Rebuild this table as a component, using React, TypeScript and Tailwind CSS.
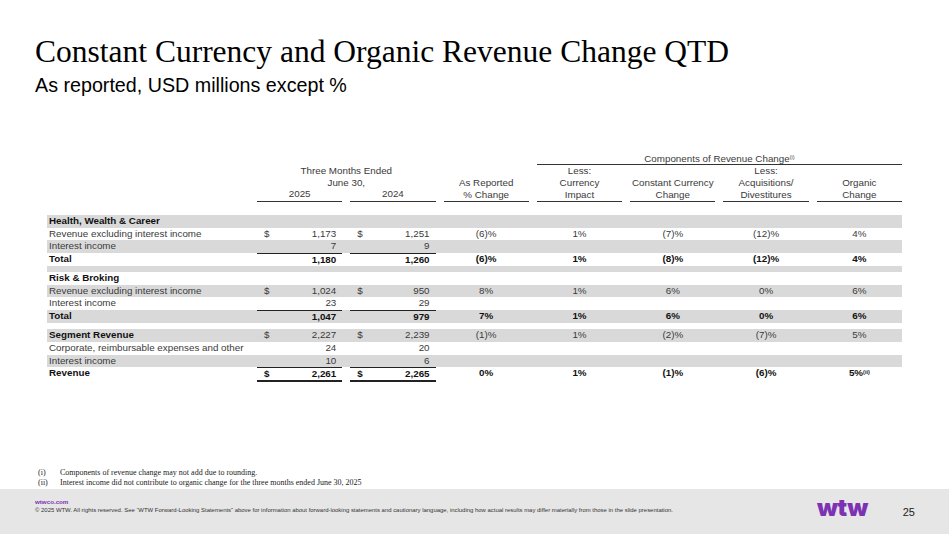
import React from 'react';
import clsx from 'clsx';

type Row = {
  label?: string;
  gray: boolean;
  kind: 'section' | 'data' | 'spacer';
  boldLabel?: boolean;
  boldValues?: boolean;
  money?: [string, string];
  dollar?: boolean;
  pcts?: string[];
  lineTop?: boolean;
  spacerH?: 'a' | 'b';
};

// Datos de la tabla, en el orden del reporte
const rows: Row[] = [
  { kind: 'section', label: 'Health, Wealth & Career', gray: true },
  {
    kind: 'data',
    label: 'Revenue excluding interest income',
    gray: false,
    money: ['1,173', '1,251'],
    dollar: true,
    pcts: ['(6)%', '1%', '(7)%', '(12)%', '4%'],
  },
  { kind: 'data', label: 'Interest income', gray: true, money: ['7', '9'] },
  {
    kind: 'data',
    label: 'Total',
    gray: false,
    boldLabel: true,
    boldValues: true,
    money: ['1,180', '1,260'],
    pcts: ['(6)%', '1%', '(8)%', '(12)%', '4%'],
    lineTop: true,
  },
  { kind: 'spacer', gray: true, spacerH: 'a' },
  { kind: 'section', label: 'Risk & Broking', gray: false },
  {
    kind: 'data',
    label: 'Revenue excluding interest income',
    gray: true,
    money: ['1,024', '950'],
    dollar: true,
    pcts: ['8%', '1%', '6%', '0%', '6%'],
  },
  { kind: 'data', label: 'Interest income', gray: false, money: ['23', '29'] },
  {
    kind: 'data',
    label: 'Total',
    gray: true,
    boldLabel: true,
    boldValues: true,
    money: ['1,047', '979'],
    pcts: ['7%', '1%', '6%', '0%', '6%'],
    lineTop: true,
  },
  { kind: 'spacer', gray: false, spacerH: 'b' },
  {
    kind: 'data',
    label: 'Segment Revenue',
    gray: true,
    boldLabel: true,
    money: ['2,227', '2,239'],
    dollar: true,
    pcts: ['(1)%', '1%', '(2)%', '(7)%', '5%'],
  },
  { kind: 'data', label: 'Corporate, reimbursable expenses and other', gray: false, money: ['24', '20'] },
  { kind: 'data', label: 'Interest income', gray: true, money: ['10', '6'] },
  {
    kind: 'data',
    label: 'Revenue',
    gray: false,
    boldLabel: true,
    boldValues: true,
    money: ['2,261', '2,265'],
    dollar: true,
    pcts: ['0%', '1%', '(1)%', '(6)%', '5%'],
    lineTop: true,
  },
];

const GRID = 'grid grid-cols-[202px_repeat(7,minmax(0,1fr))]';

const MoneyCell: React.FC<{ v: string; dollar?: boolean; top?: boolean }> = ({ v, dollar, top }) => (
  <div className="pl-2">
    <div className={clsx('flex justify-between pl-[7px] pr-[6px] h-full', top && 'border-t-[1.5px] border-[#222]')}>
      <span>{dollar ? '$' : ''}</span>
      <span>{v}</span>
    </div>
  </div>
);

const HeadCell: React.FC<{ lines: string[] }> = ({ lines }) => (
  <div className="pl-2 flex flex-col justify-end">
    <div className="border-b-[1.5px] border-[#333] text-center">
      {lines.map((l, i) => (
        <div key={i} className="h-[11.8px]">{l}</div>
      ))}
    </div>
  </div>
);

const TableRow: React.FC<{ row: Row }> = ({ row }) => {
  if (row.kind === 'spacer') {
    return (
      <div
        className={clsx(
          row.spacerH === 'a' ? 'h-[6px]' : 'h-[6.7px]',
          row.gray ? 'bg-[#d9d9d9]' : 'bg-white'
        )}
      />
    );
  }

  return (
    <div
      className={clsx(
        GRID,
        'h-[12.7px] leading-[12.7px]',
        row.gray ? 'bg-[#d9d9d9]' : 'bg-white'
      )}
    >
      <div
        className={clsx(
          'pl-[2px] whitespace-nowrap',
          (row.kind === 'section' || row.boldLabel) && 'font-bold text-[#111]'
        )}
      >
        {row.label}
      </div>
      {row.money && (
        <>
          <div className={clsx('contents', row.boldValues && 'font-bold text-[#111]')}>
            <MoneyCell v={row.money[0]} dollar={row.dollar} top={row.lineTop} />
            <MoneyCell v={row.money[1]} dollar={row.dollar} top={row.lineTop} />
          </div>
          {row.pcts &&
            row.pcts.map((p, i) => (
              <div
                key={i}
                className={clsx('pl-2 text-center', row.boldValues && 'font-bold text-[#111]')}
              >
                {row.label === 'Revenue' && i === 4 ? (
                  <span>
                    5%<sup className="text-[5.5px]">(ii)</sup>
                  </span>
                ) : (
                  p
                )}
              </div>
            ))}
        </>
      )}
    </div>
  );
};

const App: React.FC = () => {
  return (
    <div className="w-[949px] h-[534px] bg-white flex flex-col overflow-hidden">
      {/* Encabezado */}
      <div className="pl-[35px] pt-[36px]">
        <h1 className="text-[31.5px] leading-none text-black font-['Liberation_Serif','Times_New_Roman',serif]">
          Constant Currency and Organic Revenue Change QTD
        </h1>
        <p className="mt-[8px] text-[19.7px] leading-none text-black font-['Liberation_Sans',Arial,sans-serif]">
          As reported, USD millions except %
        </p>
      </div>

      {/* Tabla */}
      <div className="ml-[47px] mt-[57.5px] w-[855px] text-[9.8px] text-[#3a3a3a] font-['Liberation_Sans',Arial,sans-serif]">
        <div className={GRID}>
          <div className="col-start-5 col-span-4 pl-2">
            <div className="h-[12px] leading-[12px] text-center border-b-[1.5px] border-[#333]">
              Components of Revenue Change<sup className="text-[5.5px]">(i)</sup>
            </div>
          </div>
        </div>
        <div className={clsx(GRID, 'leading-[11.8px]')}>
          <div />
          <div className="col-span-2 flex flex-col text-center">
            <div className="pl-2 h-[11.8px]">Three Months Ended</div>
            <div className="pl-2 h-[11.8px]">June 30,</div>
            <div className="grid grid-cols-2">
              <div className="pl-2">
                <div className="border-b-[1.5px] border-[#333] h-[13.3px]">2025</div>
              </div>
              <div className="pl-2">
                <div className="border-b-[1.5px] border-[#333] h-[13.3px]">2024</div>
              </div>
            </div>
          </div>
          <HeadCell lines={['', 'As Reported', '% Change']} />
          <HeadCell lines={['Less:', 'Currency', 'Impact']} />
          <HeadCell lines={['', 'Constant Currency', 'Change']} />
          <HeadCell lines={['Less:', 'Acquisitions/', 'Divestitures']} />
          <HeadCell lines={['', 'Organic', 'Change']} />
        </div>

        <div className="mt-[13.5px]">
          {rows.map((r, i) => (
            <TableRow key={i} row={r} />
          ))}
          {/* Doble subrayado del total */}
          <div className={clsx(GRID, 'h-[2px]')}>
            <div />
            <div className="pl-2">
              <div className="h-[2px] bg-[#222]" />
            </div>
            <div className="pl-2">
              <div className="h-[2px] bg-[#222]" />
            </div>
          </div>
        </div>
      </div>

      {/* Notas */}
      <div className="mt-[86px] pl-[38px] text-[8px] leading-[10px] text-[#222] font-['Liberation_Serif','Times_New_Roman',serif]">
        <div className="grid grid-cols-[22px_1fr]">
          <span>(i)</span>
          <span>Components of revenue change may not add due to rounding.</span>
          <span>(ii)</span>
          <span>Interest income did not contribute to organic change for the three months ended June 30, 2025</span>
        </div>
      </div>

      {/* Pie de página */}
      <div className="mt-auto h-[45px] shrink-0 bg-[#e6e6e6] flex justify-between font-['Liberation_Sans',Arial,sans-serif]">
        <div className="pl-[35px] pt-[9px]">
          <div className="text-[6.2px] leading-[8px] font-bold text-[#7d32b3]">wtwco.com</div>
          <div className="text-[5.95px] leading-[8px] text-[#333] whitespace-nowrap">
            © 2025 WTW. All rights reserved. See “WTW Forward-Looking Statements” above for information about forward-looking statements and cautionary language, including how actual results may differ materially from those in the slide presentation.
          </div>
        </div>
        <div className="flex items-start gap-[35px] pr-[34px]">
          <span className="mt-[7px] text-[24px] leading-none font-black tracking-[-0.02em] text-[#7d32b3] font-['Inter','Roboto',sans-serif]">
            wtw
          </span>
          <span className="mt-[18px] text-[11px] leading-none text-[#222]">25</span>
        </div>
      </div>
    </div>
  );
};

export default App;
